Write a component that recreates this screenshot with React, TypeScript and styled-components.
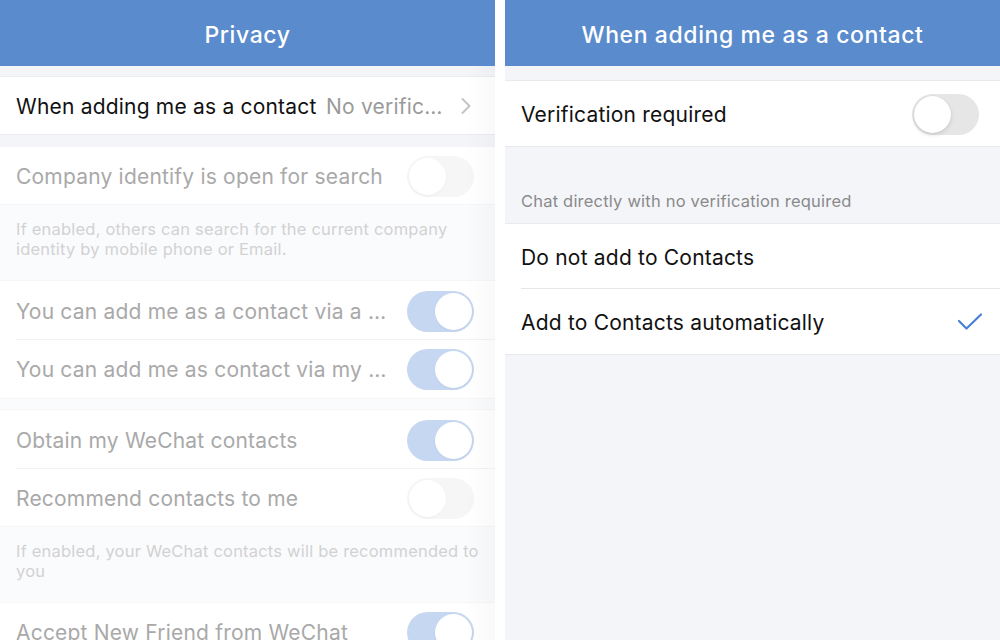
import React from "react";
import styled, { createGlobalStyle } from "styled-components";

const Global = createGlobalStyle`
  html, body { margin: 0; padding: 0; background: #ffffff; }
  body { font-family: Inter, "Noto Sans", "Liberation Sans", sans-serif; -webkit-font-smoothing: antialiased; }
  * { box-sizing: border-box; }
`;

const Screen = styled.div`
  width: 1000px;
  height: 640px;
  display: grid;
  grid-template-columns: 495px 495px;
  column-gap: 10px;
  overflow: hidden;
  background: #ffffff;
`;

const Panel = styled.div<{ $bg: string }>`
  position: relative;
  height: 640px;
  overflow: hidden;
  display: flex;
  flex-direction: column;
  background: ${(p) => p.$bg};
`;

const Header = styled.div`
  height: 66px;
  flex: none;
  background: #5a8bcd;
  color: #ffffff;
  display: flex;
  align-items: center;
  justify-content: center;
  font-size: 23px;
  font-weight: 500;
  letter-spacing: 0.6px;
  padding-top: 3px;
`;

const Band = styled.div<{ $h: number; $bg: string }>`
  height: ${(p) => p.$h}px;
  flex: none;
  background: ${(p) => p.$bg};
`;

const Group = styled.div<{ $line: string }>`
  flex: none;
  background: #ffffff;
  border-top: 1px solid ${(p) => p.$line};
  border-bottom: 1px solid ${(p) => p.$line};
`;

const Row = styled.div<{ $h: number; $sep?: string }>`
  height: ${(p) => p.$h}px;
  display: flex;
  align-items: center;
  padding: 2px 21px 0 0;
  margin-left: 16px;
  gap: 8px;
  border-bottom: 1px solid ${(p) => p.$sep || "transparent"};
  &:last-child { border-bottom-color: transparent; }
`;

const Title = styled.div<{ $color: string }>`
  flex: 1;
  min-width: 0;
  font-size: 21px;
  letter-spacing: 0.2px;
  color: ${(p) => p.$color};
  white-space: nowrap;
  overflow: hidden;
  text-overflow: ellipsis;
`;

const Value = styled.div`
  font-size: 21px;
  letter-spacing: 0.2px;
  color: #9a9a9a;
  white-space: nowrap;
  width: 124px;
  margin-right: 4px;
  overflow: hidden;
  text-overflow: ellipsis;
`;

const Desc = styled.div<{ $h: number; $bg: string; $color: string; $pt: number }>`
  height: ${(p) => p.$h}px;
  flex: none;
  background: ${(p) => p.$bg};
  color: ${(p) => p.$color};
  font-size: 16.5px;
  letter-spacing: 0.2px;
  line-height: 20px;
  padding: ${(p) => p.$pt}px 16px 0 16px;
`;

const Track = styled.div<{ $on: boolean; $faded: boolean }>`
  position: relative;
  flex: none;
  width: 67px;
  height: 41px;
  border-radius: 21px;
  background: ${(p) =>
    p.$on ? (p.$faded ? "#c6d7f1" : "#4c84d8") : p.$faded ? "#f6f6f6" : "#e6e6e6"};
`;

const Knob = styled.div<{ $on: boolean; $faded: boolean }>`
  position: absolute;
  top: 2px;
  left: ${(p) => (p.$on ? "28px" : "2px")};
  width: 37px;
  height: 37px;
  border-radius: 50%;
  background: #ffffff;
  box-shadow: ${(p) =>
    p.$faded
      ? "0 1px 3px rgba(0,0,0,0.04)"
      : "0 2px 4px rgba(0,0,0,0.12), 0 0 1px rgba(0,0,0,0.12)"};
`;

const EdgeShade = styled.div`
  position: absolute;
  top: 66px;
  right: 0;
  bottom: 0;
  width: 30px;
  background: linear-gradient(to right, rgba(0,0,0,0), rgba(0,0,0,0.025));
  pointer-events: none;
`;

const CheckMark = styled.svg`
  flex: none;
  margin-right: -4px;
`;

const ChevronMark = styled.svg`
  flex: none;
  margin-left: -2px;
  margin-right: 2px;
`;

const Toggle = ({ on, faded }: { on: boolean; faded: boolean }) => (
  <Track $on={on} $faded={faded}>
    <Knob $on={on} $faded={faded} />
  </Track>
);

const Chevron = () => (
  <ChevronMark width="12" height="18" viewBox="0 0 12 18">
    <path d="M2.5 2 L9.5 9 L2.5 16" fill="none" stroke="#c4c4c4" strokeWidth="2" strokeLinecap="round" strokeLinejoin="round" />
  </ChevronMark>
);

const Check = () => (
  <CheckMark width="26" height="20" viewBox="0 0 26 20">
    <path d="M2 9 L9.5 16.5 L24 2.5" fill="none" stroke="#4a80d6" strokeWidth="2.2" strokeLinecap="round" strokeLinejoin="round" />
  </CheckMark>
);

const FADED_TEXT = "#a9a9a9";
const FADED_SEP = "#f3f3f3";
const FADED_LINE = "#f5f6f8";

function LeftPanel() {
  return (
    <Panel $bg="#fafbfd">
      <Header>Privacy</Header>
      <Band $h={10} $bg="#f4f5f9" />
      <Group $line="#ebecef">
        <Row $h={57}>
          <Title $color="#111111">When adding me as a contact</Title>
          <Value>No verification required</Value>
          <Chevron />
        </Row>
      </Group>
      <Band $h={11} $bg="#f4f5f9" />
      <Group $line={FADED_LINE}>
        <Row $h={57}>
          <Title $color={FADED_TEXT}>Company identify is open for search</Title>
          <Toggle on={false} faded />
        </Row>
      </Group>
      <Desc $h={75} $bg="#fafbfd" $color="#d2d2d2" $pt={14}>
        If enabled, others can search for the current company identity by mobile phone or Email.
      </Desc>
      <Group $line={FADED_LINE}>
        <Row $h={59} $sep={FADED_SEP}>
          <Title $color={FADED_TEXT}>You can add me as a contact via a group chat</Title>
          <Toggle on faded />
        </Row>
        <Row $h={58}>
          <Title $color={FADED_TEXT}>You can add me as contact via my business card</Title>
          <Toggle on faded />
        </Row>
      </Group>
      <Band $h={10} $bg="#fafbfd" />
      <Group $line={FADED_LINE}>
        <Row $h={59} $sep={FADED_SEP}>
          <Title $color={FADED_TEXT}>Obtain my WeChat contacts</Title>
          <Toggle on faded />
        </Row>
        <Row $h={57}>
          <Title $color={FADED_TEXT}>Recommend contacts to me</Title>
          <Toggle on={false} faded />
        </Row>
      </Group>
      <Desc $h={75} $bg="#fafbfd" $color="#d2d2d2" $pt={14}>
        If enabled, your WeChat contacts will be recommended to you
      </Desc>
      <Group $line={FADED_LINE}>
        <Row $h={58}>
          <Title $color={FADED_TEXT}>Accept New Friend from WeChat</Title>
          <Toggle on faded />
        </Row>
      </Group>
      <EdgeShade />
    </Panel>
  );
}

function RightPanel() {
  return (
    <Panel $bg="#f4f5f9">
      <Header>When adding me as a contact</Header>
      <Band $h={14} $bg="#f4f5f9" />
      <Group $line="#e9eaee">
        <Row $h={65}>
          <Title $color="#111111">Verification required</Title>
          <Toggle on={false} faded={false} />
        </Row>
      </Group>
      <Desc $h={76} $bg="#f4f5f9" $color="#8a8a8a" $pt={44}>
        Chat directly with no verification required
      </Desc>
      <Group $line="#e9eaee">
        <Row $h={65} $sep="#e6e6e6">
          <Title $color="#111111">Do not add to Contacts</Title>
        </Row>
        <Row $h={65}>
          <Title $color="#111111">Add to Contacts automatically</Title>
          <Check />
        </Row>
      </Group>
    </Panel>
  );
}

export default function App() {
  return (
    <>
      <Global />
      <Screen>
        <LeftPanel />
        <RightPanel />
      </Screen>
    </>
  );
}
